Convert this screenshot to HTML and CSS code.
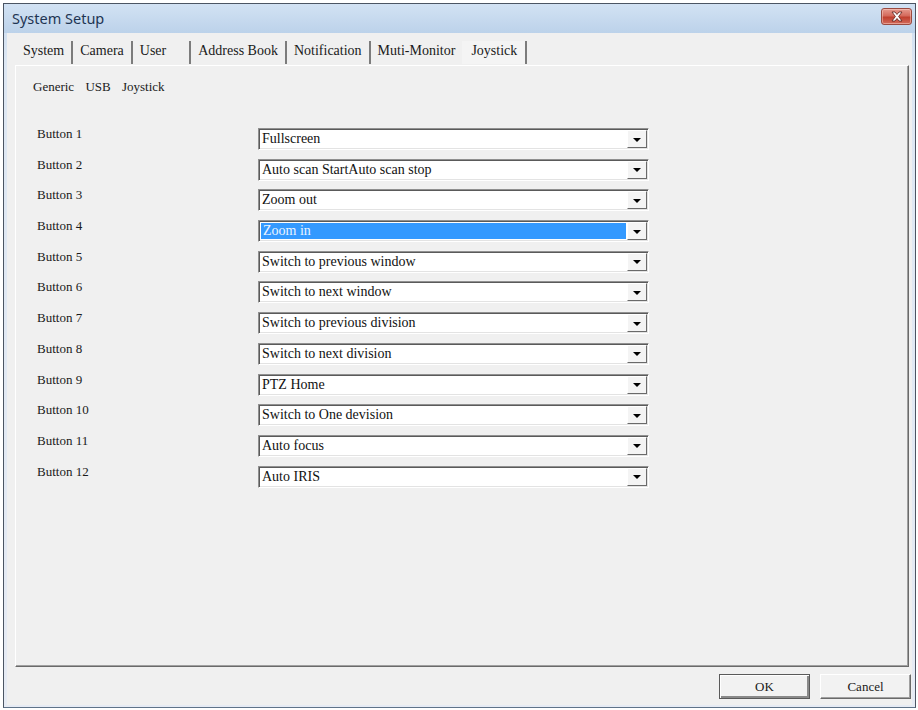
FILE: index.html
```html
<!DOCTYPE html>
<html>
<head>
<meta charset="utf-8">
<title>System Setup</title>
<link rel="stylesheet" href="styles.css">
</head>
<body>
<div class="window">
  <div class="titlebar">
    <span class="title">System Setup</span>
    <span class="close">
      <svg width="14" height="11" viewBox="0 0 14 11">
        <path d="M2 1 L5 1 L7 3.5 L9 1 L12 1 L8.6 5.5 L12 10 L9 10 L7 7.5 L5 10 L2 10 L5.4 5.5 Z" fill="#fff" stroke="#5a1f1a" stroke-width="0.8" stroke-linejoin="round"/>
      </svg>
    </span>
  </div>
  <div class="client">
    <div class="tabs">
      <span class="tab">System</span>
      <span class="tab">Camera</span>
      <span class="tab tab-wide">User</span>
      <span class="tab">Address Book</span>
      <span class="tab">Notification</span>
      <span class="tab tab-nosep">Muti-Monitor</span>
      <span class="tab tab-active">Joystick</span>
    </div>
    <div class="panel">
      <div class="device">Generic USB Joystick</div>
      <div class="mapping">
        <span class="label">Button 1</span>
        <div class="combo"><span class="value">Fullscreen</span><span class="drop"></span></div>
        <span class="label">Button 2</span>
        <div class="combo"><span class="value">Auto scan StartAuto scan stop</span><span class="drop"></span></div>
        <span class="label">Button 3</span>
        <div class="combo"><span class="value">Zoom out</span><span class="drop"></span></div>
        <span class="label">Button 4</span>
        <div class="combo"><span class="value value-selected">Zoom in</span><span class="drop"></span></div>
        <span class="label">Button 5</span>
        <div class="combo"><span class="value">Switch to previous window</span><span class="drop"></span></div>
        <span class="label">Button 6</span>
        <div class="combo"><span class="value">Switch to next window</span><span class="drop"></span></div>
        <span class="label">Button 7</span>
        <div class="combo"><span class="value">Switch to previous division</span><span class="drop"></span></div>
        <span class="label">Button 8</span>
        <div class="combo"><span class="value">Switch to next division</span><span class="drop"></span></div>
        <span class="label">Button 9</span>
        <div class="combo"><span class="value">PTZ Home</span><span class="drop"></span></div>
        <span class="label">Button 10</span>
        <div class="combo"><span class="value">Switch to One devision</span><span class="drop"></span></div>
        <span class="label">Button 11</span>
        <div class="combo"><span class="value">Auto focus</span><span class="drop"></span></div>
        <span class="label">Button 12</span>
        <div class="combo"><span class="value">Auto IRIS</span><span class="drop"></span></div>
      </div>
    </div>
    <div class="footer">
      <button class="btn btn-default">OK</button>
      <button class="btn">Cancel</button>
    </div>
  </div>
</div>
</body>
</html>
```
FILE: styles.css
```css
html, body {
  margin: 0;
  padding: 0;
  background: #ffffff;
}

body {
  font-family: "Liberation Serif", "Times New Roman", serif;
  color: #1a1a1a;
}

.window {
  box-sizing: border-box;
  margin: 3px 0 0 3px;
  width: 913px;
  height: 705px;
  border: 1px solid #4b5563;
  border-bottom-color: #5f7389;
  background: linear-gradient(#c9dbef, #dde7f3 60px, #e6ebf4);
  display: flex;
  flex-direction: column;
}

.titlebar {
  height: 29px;
  flex: none;
  display: flex;
  align-items: flex-end;
  justify-content: space-between;
  padding: 0 3px 0 8px;
  background: linear-gradient(#d2e2f3, #bcd2ea);
}

.title {
  font-family: "Noto Sans", "Open Sans", sans-serif;
  font-size: 14.5px;
  line-height: 20px;
  padding-bottom: 5px;
  color: #1e3553;
}

.close {
  align-self: flex-start;
  margin-top: 4px;
  width: 31px;
  height: 17px;
  box-sizing: border-box;
  border: 1px solid #9a4a40;
  border-radius: 3px;
  background: linear-gradient(#e69a8e, #d46a5c 45%, #c0402f 55%, #d26b5b);
  display: flex;
  align-items: center;
  justify-content: center;
  box-shadow: inset 0 0 0 1px rgba(255, 220, 210, 0.45);
}

.client {
  flex: 1;
  margin: 0 3px 2px 3px;
  background: #f0f0f0;
  display: flex;
  flex-direction: column;
}

.tabs {
  height: 32px;
  box-sizing: border-box;
  flex: none;
  display: flex;
  align-items: flex-end;
  padding: 0 0 1px 9px;
  font-size: 14px;
}

.tab {
  height: 23px;
  line-height: 20px;
  padding: 0 7px;
  border-right: 2px solid #7c7c7c;
  white-space: nowrap;
}

.tab-wide {
  padding-right: 23px;
}

.tab-nosep {
  border-right: none;
}

.tab-active {
  padding-left: 9px;
  padding-right: 8px;
  background: #f4f4f4;
}

.panel {
  flex: none;
  box-sizing: border-box;
  height: 602px;
  margin: 0 3px 0 8px;
  border-top: 1px solid #ffffff;
  border-left: 1px solid #ffffff;
  border-right: 1px solid #6a6a6a;
  border-bottom: 1px solid #6a6a6a;
  box-shadow: inset -1px -1px 0 #a0a0a0;
  padding-top: 13px;
}

.device {
  font-size: 13px;
  line-height: 16px;
  padding-left: 17px;
  word-spacing: 8px;
}

.mapping {
  margin-top: 33px;
  padding-left: 21px;
  display: grid;
  grid-template-columns: 221px 391px;
  grid-auto-rows: 22px;
  row-gap: 8.7px;
  font-size: 13px;
}

.label {
  line-height: 16px;
  align-self: start;
  margin-top: -2px;
}

.combo {
  box-sizing: border-box;
  height: 22px;
  display: flex;
  background: #ffffff;
  border: 1px solid;
  border-color: #909090 #ffffff #ffffff #909090;
  box-shadow: inset 1px 1px 0 #5a5a5a, inset -1px -1px 0 #e3e3e3;
  padding: 1px;
}

.value {
  flex: 1;
  font-size: 14px;
  line-height: 18px;
  padding: 0 0 0 2px;
  white-space: nowrap;
  overflow: hidden;
  color: #111;
}

.value-selected {
  background: #3399ff;
  color: #eaf4ff;
  margin: 1px;
  line-height: 16px;
}

.drop {
  flex: none;
  width: 20px;
  box-sizing: border-box;
  background: #f4f4f4;
  border-top: 1px solid #ffffff;
  border-left: 1px solid #ffffff;
  border-right: 1px solid #6a6a6a;
  border-bottom: 1px solid #6a6a6a;
  display: flex;
  align-items: center;
  justify-content: center;
}

.drop::after {
  content: "";
  width: 0;
  height: 0;
  border-left: 4px solid transparent;
  border-right: 4px solid transparent;
  border-top: 4px solid #000;
  margin-top: 1px;
}

.footer {
  flex: 1;
  display: flex;
  justify-content: flex-end;
  align-items: flex-start;
  gap: 10px;
  padding: 7px 1px 0 0;
}

.btn {
  box-sizing: border-box;
  width: 91px;
  height: 25px;
  font-family: "Liberation Serif", "Times New Roman", serif;
  font-size: 13px;
  color: #1a1a1a;
  background: #f2f2f2;
  border: 1px solid;
  border-color: #ffffff #6a6a6a #6a6a6a #ffffff;
  box-shadow: inset -1px -1px 0 #a0a0a0;
  padding: 0;
}

.btn-default {
  border: 1px solid #5a5a5a;
  box-shadow: inset 1px 1px 0 #ffffff, inset -2px -2px 0 #8a8a8a;
}
```
